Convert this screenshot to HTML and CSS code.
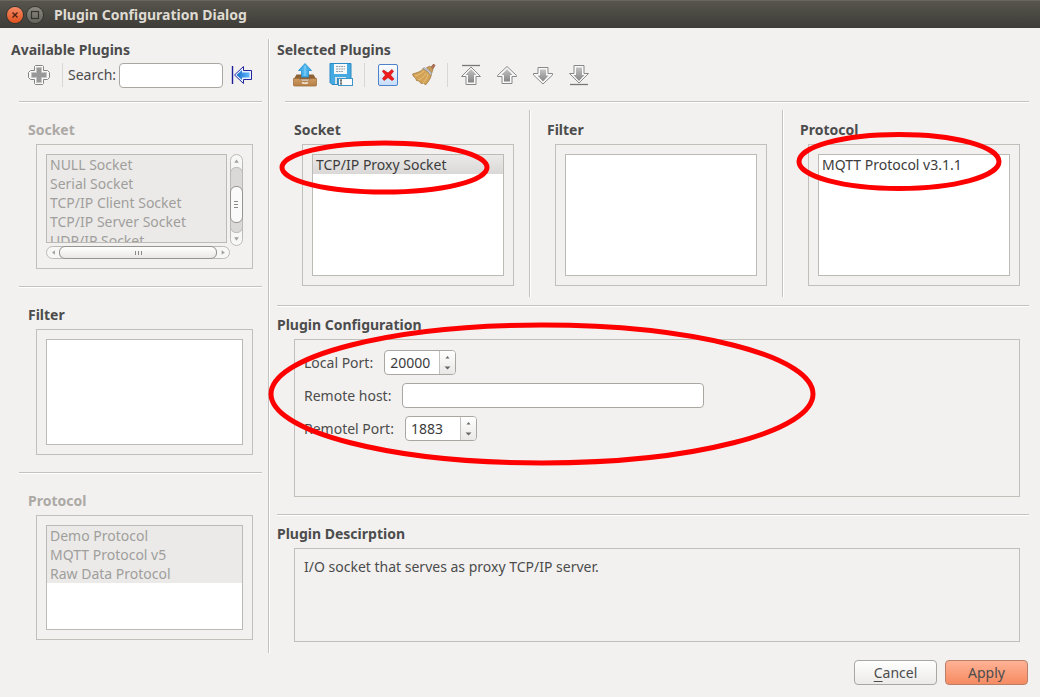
FILE: index.html
```html
<!DOCTYPE html>
<html lang="en">
<head>
<meta charset="utf-8">
<title>Plugin Configuration Dialog</title>
<link rel="stylesheet" href="styles.css">
</head>
<body>
<header class="titlebar">
  <button class="win-btn win-close" aria-label="Close"><svg width="16" height="16" viewBox="0 0 16 16"><path d="M5.500 5.500l5 5M10.500 5.500l-5 5" stroke="#4a2015" stroke-width="1.300"/></svg></button>
  <button class="win-btn win-max" aria-label="Maximize"><svg width="16" height="16" viewBox="0 0 16 16"><rect x="4.500" y="4.500" width="7" height="7" fill="none" stroke="#35342f" stroke-width="1.200"/></svg></button>
  <h1 class="window-title">Plugin Configuration Dialog</h1>
</header>

<main class="panes">
  <aside class="available">
    <h2 class="heading available-heading">Available Plugins</h2>
    <div class="toolbar available-tools">
      <button class="tool" aria-label="Add plugin"><svg width="24" height="24" viewBox="0 0 24 24"><path d="M8.500 2.500h7l1 1v4h4l2 2v5l-2 2h-4v4l-1 1h-7l-1-1v-4h-4l-2-2v-5l2-2h4v-4z" fill="#f8f8f7" stroke="#858585" stroke-linejoin="round"/><path d="M9.500 4.500h5v5h5v5h-5v5h-5v-5h-5v-5h5z" fill="#989898" stroke="#c4c4c4"/></svg></button>
      <span class="tool-sep"></span>
      <label class="search-label" for="search">Search:</label>
      <input class="field search-input" id="search" type="text">
      <button class="tool" aria-label="Collapse"><svg width="24" height="24" viewBox="0 0 24 24"><defs><linearGradient id="blue" x1="0" x2="1"><stop offset="0" stop-color="#1269c8"/><stop offset="1" stop-color="#65bbff"/></linearGradient></defs><path d="M2.500 3v18" stroke="#1b1b99" stroke-width="1.400"/><path d="M4.500 12L13.500 3.500V7.500H21.500V16.500H13.500V20.500z" fill="#e9f2fd" stroke="#24249d"/><path d="M6.500 12L12 7V9.500H19.500V14.500H12V17z" fill="url(#blue)"/></svg></button>
    </div>
    <hr class="rule available-rule">
    <section class="plugin-group">
      <h3 class="heading heading-disabled">Socket</h3>
      <div class="group-box scroll-grid">
        <ul class="list" role="listbox" aria-label="Available sockets">
          <li class="item item-disabled">NULL Socket</li>
          <li class="item item-disabled">Serial Socket</li>
          <li class="item item-disabled">TCP/IP Client Socket</li>
          <li class="item item-disabled">TCP/IP Server Socket</li>
          <li class="item item-disabled">UDP/IP Socket</li>
        </ul>
        <div class="scroll scroll-v">
          <svg class="scroll-cap" viewBox="0 0 11 13"><path d="M3 8.500l2.500-3.500 2.500 3.500z" fill="#a3a19e"/></svg>
          <div class="track"><div class="thumb"><svg width="11" height="11" viewBox="0 0 11 11"><path d="M3 2.500h4M3 5.500h4M3 8.500h4" stroke="#8b8985"/></svg></div></div>
          <svg class="scroll-cap" viewBox="0 0 11 13"><path d="M3 4.500h5l-2.500 4z" fill="#a3a19e"/></svg>
        </div>
        <div class="scroll scroll-h">
          <svg class="scroll-cap" viewBox="0 0 13 11"><path d="M8.500 3v5L5.500 5.500z" fill="#a3a19e"/></svg>
          <div class="track"><div class="thumb"><svg width="11" height="11" viewBox="0 0 11 11"><path d="M2.500 4v4M5.500 4v4M8.500 4v4" stroke="#8b8985"/></svg></div></div>
          <svg class="scroll-cap" viewBox="0 0 13 11"><path d="M5 3v5l3.500-2.500z" fill="#a3a19e"/></svg>
        </div>
      </div>
    </section>
    <hr class="rule available-rule">
    <section class="plugin-group">
      <h3 class="heading">Filter</h3>
      <div class="group-box"><ul class="list" role="listbox" aria-label="Available filters"></ul></div>
    </section>
    <hr class="rule available-rule">
    <section class="plugin-group plugin-group-last">
      <h3 class="heading heading-disabled">Protocol</h3>
      <div class="group-box">
        <ul class="list" role="listbox" aria-label="Available protocols">
          <li class="item item-disabled">Demo Protocol</li>
          <li class="item item-disabled">MQTT Protocol v5</li>
          <li class="item item-disabled">Raw Data Protocol</li>
        </ul>
      </div>
    </section>
  </aside>

  <div class="selected">
    <h2 class="heading">Selected Plugins</h2>
    <div class="toolbar selected-tools">
      <button class="tool" aria-label="Load"><svg width="24" height="24" viewBox="0 0 24 24"><defs><linearGradient id="wood" x2="0" y2="1"><stop offset="0" stop-color="#cf9c62"/><stop offset="1" stop-color="#b67f48"/></linearGradient></defs><path d="M3.500 11.500h17l3 5H.5z" fill="#8d6236"/><path d="M.5 15.500h6l2 2.500h7l2-2.500h6v6.500q0 1-1 1h-21q-1 0-1-1z" fill="url(#wood)" stroke="#a0713f" stroke-width=".8"/><path d="M9 19.500q3 1.500 6 0" fill="none" stroke="#eee3d1" stroke-width="1.500"/><path d="M12 .5L18.500 7.500H15.500V14H8.500V7.500H5.500z" fill="#46aeea" stroke="#2590d0" stroke-width=".8"/><path d="M12 2.500v10.500" stroke="#70c5f3" stroke-width="2.500"/></svg></button>
      <button class="tool" aria-label="Save as"><svg width="24" height="24" viewBox="0 0 24 24"><path d="M1 .5h21V21.500H3L1 19.500z" fill="#45a9e2" stroke="#2b8bc4"/><path d="M5 1h13v10H5z" fill="#f7f8f8"/><path d="M7 3.500h9M7 6h9M7 8.500h7" stroke="#8fa0ab" stroke-dasharray="2 .6"/><path d="M6 14h11v7H6z" fill="#d3e2eb"/><path d="M8 15h2.500v6H8z" fill="#3a86b4"/><rect x="9.500" y="15.500" width="14" height="7" fill="#fafafa" stroke="#3c96c9"/><path d="M11 17h2M12 17v4M11 21h2" stroke="#444"/></svg></button>
      <span class="tool-sep"></span>
      <button class="tool" aria-label="Remove"><svg width="24" height="24" viewBox="0 0 24 24"><defs><linearGradient id="pane" x2="0" y2="1"><stop offset="0" stop-color="#fff"/><stop offset="1" stop-color="#c5dcf9"/></linearGradient></defs><rect x="2.500" y="1.500" width="19" height="21" rx="1.500" fill="url(#pane)" stroke="#4c83ca"/><path d="M7.500 7l4.500 3L16 6.500l1.500 2-3 3.500 3.500 4-2 1.500-4-3-4 3-1.500-2 3-3.500L6.500 8.500z" fill="#ef1a1a" stroke="#c81010" stroke-width=".7"/></svg></button>
      <button class="tool" aria-label="Clear"><svg width="24" height="24" viewBox="0 0 24 24"><path d="M18 6l3-4.500q1.500-.5 2 1L19.500 8z" fill="#b57454" stroke="#884d36" stroke-width=".7"/><path d="M11.500 5C9 9 5 9.500.5 11l1 2.500 2 1.500 1 2.500 2.500.5 2 2.500 2.500-.5 2 2C17 18 19 15 19.500 11z" fill="#d2a256" stroke="#987038" stroke-width=".7"/><path d="M12 8c-3 3-6 4-9 5M14 10c-2 4-5 6-8 7M16 11c-1 4-3 7-5 9" fill="none" stroke="#ecca84" stroke-width=".8"/><path d="M14.500 4.500L18 3l3 3-1 4z" fill="#c79a5a" stroke="#987038" stroke-width=".5"/><path d="M12 4.500q5 1.500 8 6.500l-1.500 1q-3-5-7.500-6z" fill="#c5c8d2" stroke="#85868e" stroke-width=".5"/></svg></button>
      <span class="tool-sep"></span>
      <button class="tool" aria-label="Move to top"><svg width="24" height="24" viewBox="0 0 24 24"><defs><linearGradient id="grey" x2="0" y2="1"><stop offset="0" stop-color="#c3c3c3"/><stop offset="1" stop-color="#858585"/></linearGradient></defs><path d="M3 2.500h18" stroke="#777" stroke-width="1.300"/><path d="M12 4L21.500 13.500H17V21.500H7V13.500H2.500z" fill="#f8f8f8" stroke="#888" stroke-linejoin="round"/><path d="M12 6l5.500 6H15v7.500H9V12H6.500z" fill="url(#grey)"/></svg></button>
      <button class="tool" aria-label="Move up"><svg width="24" height="24" viewBox="0 0 24 24"><path d="M12 3.500L21.500 12.500V13.500H17V20.500H7V13.500H2.500V12.500z" fill="#f8f8f8" stroke="#888" stroke-linejoin="round"/><path d="M12 6l5.500 6H15v6.500H9V12H6.500z" fill="url(#grey)"/></svg></button>
      <button class="tool" aria-label="Move down"><svg width="24" height="24" viewBox="0 0 24 24"><path d="M12 21L21.500 12V10.500H17V4.500H7V10.500H2.500V12z" fill="#f8f8f8" stroke="#888" stroke-linejoin="round"/><path d="M12 18.500l5.500-6H15V6.500H9V12.500H6.500z" fill="url(#grey)"/></svg></button>
      <button class="tool" aria-label="Move to bottom"><svg width="24" height="24" viewBox="0 0 24 24"><path d="M3 21.500h18" stroke="#777" stroke-width="1.300"/><path d="M12 20L21.500 10.500H17V2.500H7V10.500H2.500z" fill="#f8f8f8" stroke="#888" stroke-linejoin="round"/><path d="M12 18l5.500-6H15V4.500H9V12H6.500z" fill="url(#grey)"/></svg></button>
    </div>
    <hr class="rule selected-rule">
    <div class="columns">
      <section class="column">
        <h3 class="heading">Socket</h3>
        <div class="group-box"><ul class="list" role="listbox" aria-label="Selected sockets"><li class="item item-selected" role="option" aria-selected="true">TCP/IP Proxy Socket</li></ul></div>
      </section>
      <div class="divider column-divider"></div>
      <section class="column">
        <h3 class="heading">Filter</h3>
        <div class="group-box"><ul class="list" role="listbox" aria-label="Selected filters"></ul></div>
      </section>
      <div class="divider column-divider"></div>
      <section class="column">
        <h3 class="heading">Protocol</h3>
        <div class="group-box"><ul class="list" role="listbox" aria-label="Selected protocols"><li class="item" role="option">MQTT Protocol v3.1.1</li></ul></div>
      </section>
    </div>
    <hr class="rule">
    <section class="detail detail-config">
      <h2 class="heading">Plugin Configuration</h2>
      <form class="detail-box form">
        <div class="form-row">
          <label for="local-port">Local Port:</label>
          <span class="spin"><input class="spin-input" id="local-port" type="number" value="20000"><span class="spin-buttons"><button class="spin-btn" type="button" aria-label="Increase"><svg width="7" height="4" viewBox="0 0 7 4"><path d="M1.500 3.500L3.500 1 5.500 3.500z" fill="#666"/></svg></button><button class="spin-btn" type="button" aria-label="Decrease"><svg width="7" height="4" viewBox="0 0 7 4"><path d="M.5.5h6L3.500 3.500z" fill="#666"/></svg></button></span></span>
        </div>
        <div class="form-row">
          <label for="remote-host">Remote host:</label>
          <input class="field host-input" id="remote-host" type="text">
        </div>
        <div class="form-row">
          <label for="remote-port">Remotel Port:</label>
          <span class="spin"><input class="spin-input" id="remote-port" type="number" value="1883"><span class="spin-buttons"><button class="spin-btn" type="button" aria-label="Increase"><svg width="7" height="4" viewBox="0 0 7 4"><path d="M1.500 3.500L3.500 1 5.500 3.500z" fill="#666"/></svg></button><button class="spin-btn" type="button" aria-label="Decrease"><svg width="7" height="4" viewBox="0 0 7 4"><path d="M.5.5h6L3.500 3.500z" fill="#666"/></svg></button></span></span>
        </div>
      </form>
    </section>
    <hr class="rule">
    <section class="detail detail-description">
      <h2 class="heading">Plugin Descirption</h2>
      <div class="detail-box"><p class="description">I/O socket that serves as proxy TCP/IP server.</p></div>
    </section>
  </div>
</main>

<footer class="actions">
  <button class="btn"><u class="mnemonic">C</u>ancel</button>
  <button class="btn btn-primary">Apply</button>
</footer>

<svg class="marks" width="1040" height="697" viewBox="0 0 1040 697" aria-hidden="true">
  <g fill="none" stroke="#f00" stroke-width="5">
    <ellipse cx="384.500" cy="167.500" rx="102.500" ry="24.500"/>
    <ellipse cx="899" cy="161.500" rx="100" ry="27"/>
    <ellipse cx="542" cy="394" rx="271" ry="69"/>
  </g>
</svg>
</body>
</html>
```

FILE: styles.css
```css
* {
  box-sizing: border-box;
}

body {
  display: flex;
  flex-direction: column;
  position: relative;
  min-height: 100vh;
  margin: 0;
  background: #f2f1f0;
  color: #4c4c4c;
  font: 14px/20px "Noto Sans", "Open Sans", sans-serif;
}

button,
input {
  margin: 0;
  font: inherit;
  color: inherit;
}

.titlebar {
  display: flex;
  align-items: center;
  gap: 4px;
  height: 28px;
  padding: 0 7px;
  background: linear-gradient(#57554d, #3d3c37);
  border-top: 1px solid #67655c;
}

.win-btn {
  width: 16px;
  height: 16px;
  padding: 0;
  border: 0;
  border-radius: 50%;
  box-shadow: 0 0 0 1px #35342f;
}

.win-btn svg,
.tool svg {
  display: block;
}

.win-close {
  background: linear-gradient(#f58a65, #e2511d);
}

.win-max {
  background: linear-gradient(#8b8980, #65635b);
}

.window-title {
  margin: 0 0 0 7px;
  color: #dfdbd2;
  font-size: 14px;
  font-weight: 700;
}

.panes {
  display: grid;
  grid-template-columns: 268px minmax(0, 1fr);
  flex: 1;
  margin-top: 11px;
}

.heading {
  margin: 0;
  font-size: 14px;
  line-height: 20px;
  font-weight: 700;
}

.heading-disabled {
  color: #aca9a5;
}

.rule {
  width: auto;
  height: 2px;
  margin: 0;
  border: 0;
  border-top: 1px solid #c3c2be;
  background: #fff;
}

.divider {
  width: 2px;
  border-left: 1px solid #c3c2be;
  background: #fff;
}

.toolbar {
  display: flex;
  align-items: center;
  height: 30px;
  margin-bottom: 11px;
}

.tool {
  flex: none;
  width: 24px;
  height: 24px;
  padding: 0;
  border: 0;
  background: none;
}

.tool-sep {
  width: 1px;
  height: 24px;
  background: #d8d7d5;
}

.available {
  display: flex;
  flex-direction: column;
  padding-top: 1px;
}

.available-heading {
  padding-left: 11px;
}

.available-tools {
  padding: 0 14px 0 27px;
}

.available-tools .tool-sep {
  margin: 0 5px 0 11px;
}

.field {
  height: 25px;
  border: 1px solid #aaa7a2;
  border-radius: 4px;
  background: #fff;
  padding: 0 5px;
}

.search-input {
  flex: 1;
  min-width: 0;
  margin: 0 7px 0 3px;
}

.available-rule {
  margin: 0 6px 0 19px;
}

.plugin-group {
  display: flex;
  flex: 1 1 auto;
  flex-direction: column;
  padding: 17px 15px 17px 28px;
}

.plugin-group-last {
  padding-bottom: 13px;
}

.group-box {
  display: grid;
  flex: 1 1 100px;
  min-height: 0;
  margin: 4px 0 0 8px;
  padding: 9px;
  border: 1px solid #c0bfba;
}

.list {
  min-height: 0;
  margin: 0;
  padding: 0;
  overflow: hidden;
  border: 1px solid #bcbab4;
  background: #fff;
  list-style: none;
}

.item {
  height: 19px;
  padding-left: 3px;
  line-height: 19px;
  white-space: nowrap;
  color: #3c3c3c;
}

.item-disabled {
  background: #ebeae9;
  color: #a09e9b;
}

.item-selected {
  background: linear-gradient(#ebeae9, #dad8d6);
}

.scroll-grid {
  grid-template: minmax(0, 1fr) 13px / minmax(0, 1fr) 13px;
  gap: 3px;
}

.scroll {
  display: flex;
  border: 1px solid #bcbab6;
  border-radius: 7px;
  background: #f7f7f6;
}

.scroll-v {
  flex-direction: column;
  margin-bottom: -3px;
}

.scroll-h {
  margin-right: -3px;
}

.scroll-cap {
  flex: none;
  width: 12px;
  height: 11px;
}

.scroll-v .scroll-cap {
  width: 11px;
  height: 12px;
}

.track {
  display: flex;
  flex: 1;
  min-width: 0;
  min-height: 0;
  border-radius: 6px;
  background: #dad9d7;
}

.scroll-v .track {
  flex-direction: column;
  margin: 0 -1px;
  padding: 18px 0 9px;
  border: 1px solid #bcbab6;
}

.scroll-h .track {
  margin: -1px 0;
}

.thumb {
  display: flex;
  flex: 1;
  align-items: center;
  justify-content: center;
  border: 1px solid #96948f;
  border-radius: 6px;
  background: #fafafa;
}

.scroll-v .thumb {
  margin: 0 -1px;
}

.scroll-h .thumb {
  background: linear-gradient(#fff, #e9e8e6);
}

.selected {
  display: flex;
  flex-direction: column;
  min-width: 0;
  padding: 1px 11px 0 8px;
  border-left: 1px solid #c3c2be;
  box-shadow: inset 1px 0 #fff;
}

.selected-tools {
  gap: 12px;
  padding-left: 16px;
}

.selected-tools .tool-sep {
  margin: 0 -1px;
}

.selected-rule {
  margin-left: 8px;
}

.columns {
  display: grid;
  grid-template-columns: minmax(0, 1fr) auto minmax(0, 1fr) auto minmax(0, 1fr);
  padding: 7px 9px 8px 17px;
}

.column {
  display: flex;
  flex-direction: column;
  padding: 10px 0 11px;
}

.column .group-box {
  flex: 1 0 142px;
}

.column-divider {
  margin: 0 16px 0 15px;
}

.detail {
  display: flex;
  flex-direction: column;
  padding: 8px 9px 17px 0;
}

.detail-config {
  flex: 1;
}

.detail-description {
  padding-bottom: 11px;
}

.detail-box {
  flex: 1;
  min-height: 94px;
  margin: 4px 0 0 17px;
  padding: 10px 9px;
  border: 1px solid #c0bfba;
}

.description {
  margin: -2px 0 0;
}

.form {
  display: flex;
  flex-direction: column;
  gap: 8px;
}

.form-row {
  display: flex;
  align-items: center;
  gap: 11px;
}

.host-input {
  width: 302px;
}

.spin {
  display: flex;
  width: 72px;
  height: 25px;
  overflow: hidden;
  border: 1px solid #aaa7a2;
  border-radius: 4px;
  background: #fff;
}

.spin-input {
  flex: 1;
  min-width: 0;
  padding: 0 0 0 5px;
  border: 0;
  background: none;
  color: #3c3c3c;
  appearance: textfield;
}

.spin-input::-webkit-inner-spin-button {
  display: none;
}

.spin-buttons {
  display: flex;
  flex-direction: column;
  width: 16px;
  border-left: 1px solid #c3c2be;
  background: linear-gradient(#fff, #e9e8e6);
}

.spin-btn {
  display: flex;
  flex: 1;
  align-items: center;
  justify-content: center;
  padding: 0;
  border: 0;
  background: none;
}

.actions {
  display: flex;
  justify-content: flex-end;
  gap: 8px;
  padding: 7px 12px 12px;
}

.btn {
  width: 83px;
  height: 25px;
  padding: 0;
  border: 1px solid #aaa7a2;
  border-radius: 4px;
  background: linear-gradient(#fff, #ebeae8);
}

.btn-primary {
  border-color: #b97f68;
  background: linear-gradient(#ffb295, #f58b62);
}

.mnemonic {
  text-underline-offset: 3px;
}

.marks {
  position: absolute;
  top: 0;
  left: 0;
  pointer-events: none;
}
```
